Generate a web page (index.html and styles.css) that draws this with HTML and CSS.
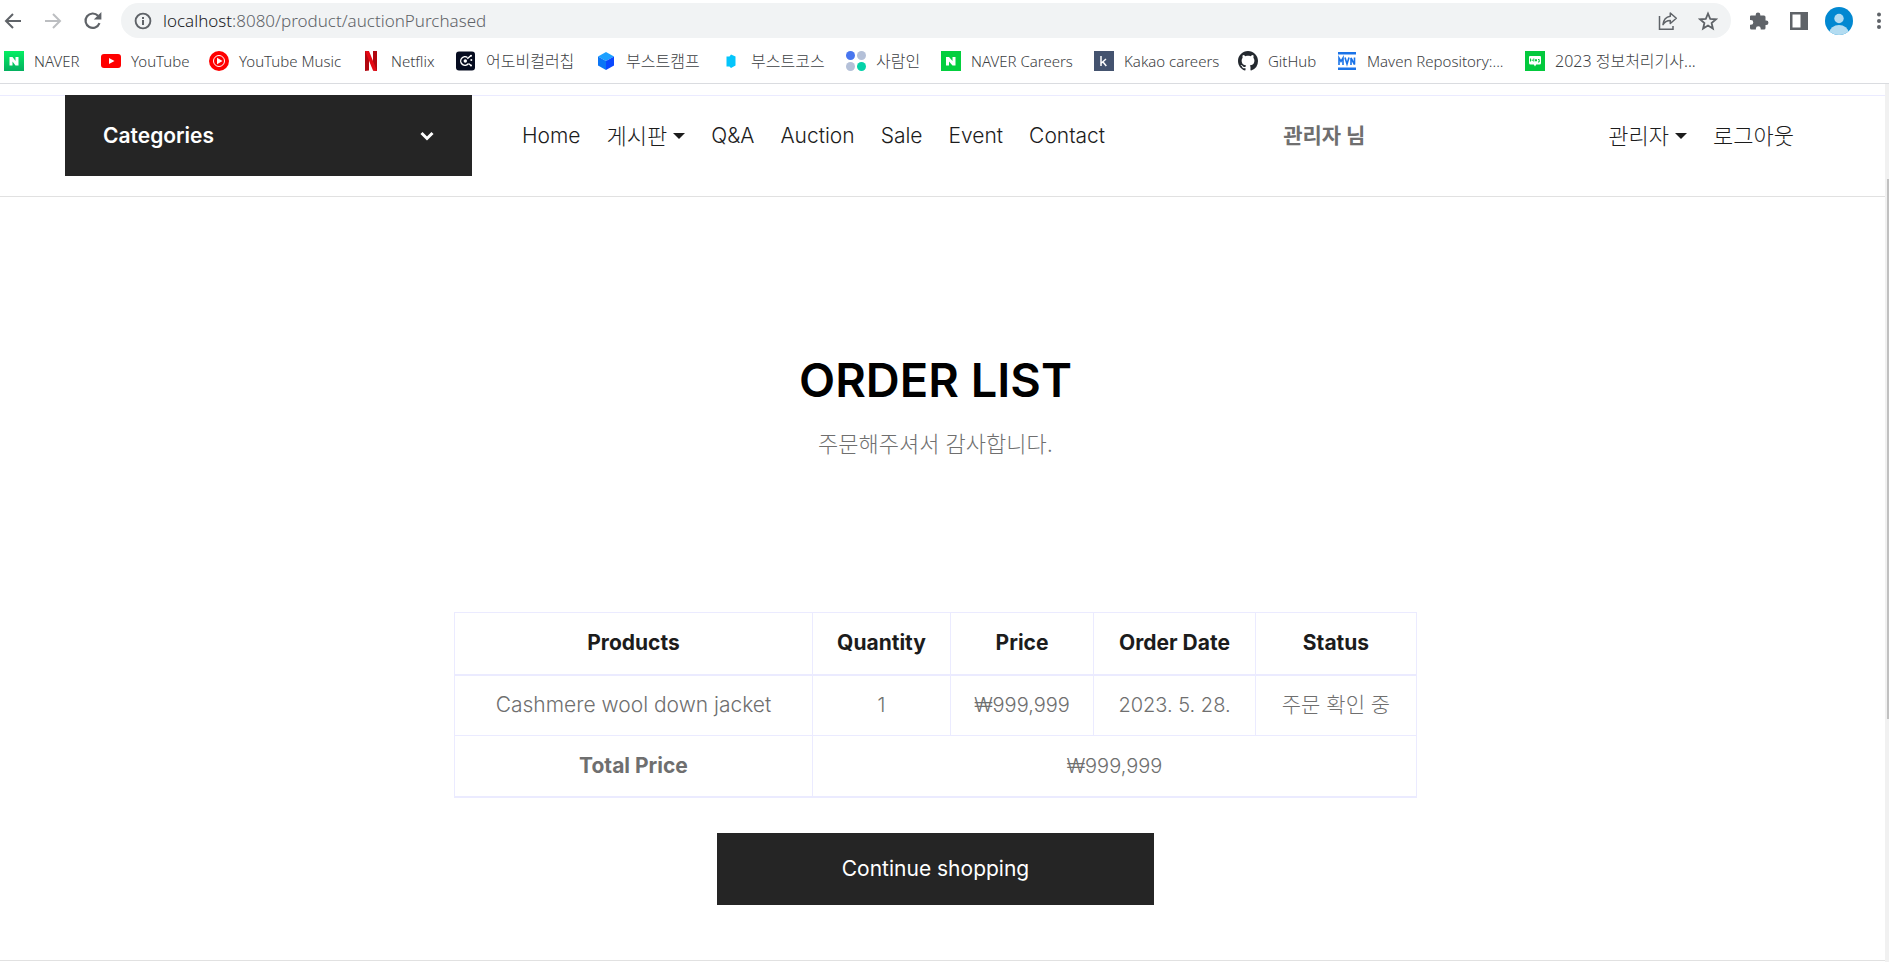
FILE: index.html
```html
<!DOCTYPE html>
<html lang="ko">
<head>
<meta charset="utf-8">
<title>Order List</title>
<link rel="stylesheet" href="styles.css">
</head>
<body>
<header class="browser">
  <div class="toolbar">
    <button class="tool" aria-label="Back"><svg width="20" height="20" viewBox="0 0 20 20" fill="none" stroke="#5f6368" stroke-width="2"><path d="M18 10H3M10 3l-7 7 7 7"/></svg></button>
    <button class="tool" aria-label="Forward"><svg width="20" height="20" viewBox="0 0 20 20" fill="none" stroke="#bcbec1" stroke-width="2"><path d="M2 10h15M10 3l7 7-7 7"/></svg></button>
    <button class="tool" aria-label="Reload"><svg width="20" height="20" viewBox="0 0 20 20"><path d="M16.5 12.2A7.2 7.2 0 1 1 15 4.8" fill="none" stroke="#5f6368" stroke-width="2.2"/><path d="M18.4 1v7.6h-7.6z" fill="#5f6368"/></svg></button>
    <div class="address">
      <svg width="18" height="18" viewBox="0 0 18 18"><circle cx="9" cy="9" r="7.4" fill="none" stroke="#5f6368" stroke-width="1.9"/><path d="M8 8h2v5H8zM8 5h2v2H8z" fill="#5f6368"/></svg>
      <div class="url"><span class="host">localhost</span>:8080/product/auctionPurchased</div>
      <button class="tool" aria-label="Share"><svg width="20" height="20" viewBox="0 0 20 20" fill="none" stroke="#5f6368" stroke-width="1.5"><path d="M1.5 5v13.2H15V15"/><path d="M12.3 2l6 5.3-6 5.200V9.400C8.500 9.400 6.500 10.800 5 13.600 5.500 9 8 5.800 12.300 5.200z" stroke-linejoin="round"/></svg></button>
      <button class="tool" aria-label="Bookmark"><svg width="20" height="20" viewBox="0 0 20 20"><path d="M10 2.500l2.200 5.300 5.700.5-4.300 3.700 1.300 5.600L10 14.600l-4.900 3 1.300-5.600-4.300-3.700 5.700-.5z" fill="none" stroke="#5f6368" stroke-width="1.8"/></svg></button>
    </div>
    <button class="tool" aria-label="Extensions"><svg width="20" height="20" viewBox="0 0 20 20" fill="#5f6368"><path d="M2 4.500h4.700v-.8a2.300 2.300 0 0 1 4.600 0v.8H15q1.500 0 1.500 1.500v3.400h.7a2.200 2.200 0 0 1 0 4.500h-.7V17q0 1.500-1.500 1.500h-3.300v-.9a2.400 2.400 0 0 0-4.800 0v.9H2.500Q1 18.500 1 17v-3.200h.9a2.400 2.400 0 0 0 0-4.800H1V5.500q0-1 1-1z"/></svg></button>
    <button class="tool" aria-label="Side panel"><svg width="20" height="20" viewBox="0 0 20 20"><path d="M1 1h18v18H1zM3.500 3.500v13h8v-13z" fill="#5f6368" fill-rule="evenodd"/></svg></button>
    <button class="tool avatar" aria-label="Profile"><svg width="28" height="28" viewBox="0 0 28 28"><defs><clipPath id="face"><circle cx="14" cy="14" r="14"/></clipPath></defs><g clip-path="url(#face)"><path d="M0 0h28v28H0z" fill="#0288d1"/><circle cx="14" cy="11.500" r="4.700" fill="#b3dcf1"/><ellipse cx="14" cy="25.500" rx="9.500" ry="7.500" fill="#b3dcf1"/></g></svg></button>
    <button class="tool" aria-label="Menu"><svg width="20" height="20" viewBox="0 0 20 20" fill="#5f6368"><circle cx="10" cy="3.500" r="2"/><circle cx="10" cy="10" r="2"/><circle cx="10" cy="16" r="2"/></svg></button>
  </div>
  <nav class="bookmarks" aria-label="Bookmarks">
    <a href="#"><svg width="20" height="20" viewBox="0 0 20 20"><defs><linearGradient id="nv" x1="0" y1="0" x2="0" y2="1"><stop stop-color="#03ef62"/><stop offset="1" stop-color="#04b060"/></linearGradient></defs><path d="M0 0h20v20H0z" fill="url(#nv)"/><path d="M5.500 6h3l3 4V6h3v8.500h-3l-3-4v4h-3z" fill="#fff"/></svg>NAVER</a>
    <a href="#"><svg width="20" height="20" viewBox="0 0 20 20"><rect y="3" width="20" height="14" rx="3" fill="#f00"/><path d="M8 7l5.500 3L8 13z" fill="#fff"/></svg>YouTube</a>
    <a href="#"><svg width="20" height="20" viewBox="0 0 20 20"><circle cx="10" cy="10" r="10" fill="#f00"/><circle cx="10" cy="10" r="5.500" fill="none" stroke="#fff"/><path d="M8 6.800l5.500 3.200L8 13.200z" fill="#fff"/></svg>YouTube Music</a>
    <a href="#"><svg width="20" height="20" viewBox="0 0 20 20"><path d="M4 0h4v19.500L4 20zM12 0h4v20l-4-.5z" fill="#b1060f"/><path d="M4 0h4l8 20-4-.5z" fill="#e50914"/></svg>Netflix</a>
    <a href="#" class="hangul"><svg width="20" height="20" viewBox="0 0 20 20"><rect width="19" height="19" y=".5" rx="3" fill="#060c20"/><g fill="none" stroke="#fff" stroke-width="1.400"><path d="M12.300 12.800A4.300 4.300 0 1 1 11.500 6.500"/><path d="M11.300 7.700l3.700-3.200M12.500 12.500l2.500 2"/></g><g fill="#fff"><circle cx="9.300" cy="10" r="1.700"/><circle cx="15" cy="4.700" r="1"/><circle cx="15.300" cy="9" r="1"/><circle cx="15" cy="14.500" r="1"/></g></svg>어도비컬러칩</a>
    <a href="#" class="hangul"><svg width="20" height="20" viewBox="0 0 20 20"><path d="M10 1l8 4.500L10 10 2 5.500z" fill="#1da0ff"/><path d="M2 5.500l8 4.500v9l-8-4.500z" fill="#0b75f5"/><path d="M18 5.500L10 10v9l8-4.500z" fill="#0b48ff"/></svg>부스트캠프</a>
    <a href="#" class="hangul"><svg width="20" height="20" viewBox="0 0 20 20"><path d="M5.500 5.500h3L10 3.500l4.500 2v9L10 17l-1.500-1.500h-3z" fill="#04c5fb"/></svg>부스트코스</a>
    <a href="#" class="hangul"><svg width="20" height="20" viewBox="0 0 20 20"><circle cx="4.500" cy="4.500" r="4.500" fill="#4876ef"/><circle cx="15.500" cy="4.500" r="4.500" fill="#b4c0d8"/><circle cx="4.500" cy="15.500" r="4.500" fill="#b4c0d8"/><circle cx="15.500" cy="15.500" r="4.500" fill="#04d2a9"/></svg>사람인</a>
    <a href="#"><svg width="20" height="20" viewBox="0 0 20 20"><path d="M0 0h20v20H0z" fill="#03cf3e"/><path d="M5 6h3l3.500 4V6h3v8.500h-3L8 10.500v4H5z" fill="#fff"/></svg>NAVER Careers</a>
    <a href="#"><svg width="20" height="20" viewBox="0 0 20 20"><path d="M0 0h20v20H0z" fill="#44536f"/><path d="M7 5v10M12 8l-4.500 4M8.800 10.800L12.300 15" fill="none" stroke="#fff" stroke-width="1.500"/></svg>Kakao careers</a>
    <a href="#"><svg width="20" height="20" viewBox="0 0 16 16"><path fill="#24292f" d="M8 0C3.580 0 0 3.580 0 8c0 3.540 2.290 6.530 5.470 7.590.4.070.55-.17.55-.38 0-.19-.01-.82-.01-1.490-2.010.37-2.530-.49-2.690-.94-.09-.23-.48-.94-.82-1.130-.28-.15-.68-.52-.01-.53.63-.01 1.080.58 1.230.82.72 1.210 1.870.87 2.330.66.070-.52.28-.87.51-1.070-1.780-.2-3.640-.89-3.640-3.950 0-.87.31-1.590.82-2.150-.08-.2-.36-1.020.08-2.120 0 0 .67-.21 2.200.82.64-.18 1.320-.27 2-.27s1.360.09 2 .27c1.530-1.040 2.200-.82 2.200-.82.44 1.100.16 1.920.08 2.120.51.56.82 1.270.82 2.150 0 3.070-1.870 3.750-3.650 3.950.29.25.54.73.54 1.480 0 1.070-.01 1.930-.01 2.200 0 .21.15.46.55.38A8.010 8.010 0 0 0 16 8c0-4.420-3.580-8-8-8z"/></svg>GitHub</a>
    <a href="#"><svg width="20" height="20" viewBox="0 0 20 20"><path d="M1 1h18v2.500H1zM1 16.500h18V19H1z" fill="#1a73e8"/><path d="M2 14V7l2 3.500L6 7v7M8 6.500l2 6.500 2-6.500M14 14V7l3.500 6.500V6.500" fill="none" stroke="#1a73e8" stroke-width="1.600"/></svg>Maven Repository:...</a>
    <a href="#" class="hangul"><svg width="20" height="20" viewBox="0 0 20 20"><path d="M0 0h20v20H0z" fill="#03c93d"/><path d="M5 5h10q1 0 1 1v6q0 1.500-1.500 1.500h-3.300L10 15.500l-1.200-2H5.500Q4 13.500 4 12V6q0-1 1-1z" fill="#fff"/><path d="M5.500 7.500v3M7.200 10V8.500M8.800 7.500v3M10.500 8.500h1v1.500h-1zM13 8.500h1.200v2.500H13" fill="none" stroke="#03c93d"/></svg>2023 정보처리기사...</a>
  </nav>
</header>
<div class="viewport">
  <div class="page">
    <div class="sitebar">
      <button class="categories">Categories<svg width="14" height="10" viewBox="0 0 14 10"><path d="M1.500 2L7 7.500 12.500 2" fill="none" stroke="#fff" stroke-width="3"/></svg></button>
      <nav class="menu" aria-label="Main">
        <a href="#">Home</a>
        <a href="#" class="drop">게시판</a>
        <a href="#">Q&amp;A</a>
        <a href="#">Auction</a>
        <a href="#">Sale</a>
        <a href="#">Event</a>
        <a href="#">Contact</a>
      </nav>
      <strong class="user">관리자 님</strong>
      <nav class="menu account" aria-label="Account">
        <a href="#" class="drop">관리자</a>
        <a href="#">로그아웃</a>
      </nav>
    </div>
    <main class="order">
      <h1>ORDER LIST</h1>
      <p class="thanks">주문해주셔서 감사합니다.</p>
      <table>
        <colgroup><col class="product"><col class="quantity"><col class="price"><col class="date"><col class="status"></colgroup>
        <thead><tr><th>Products</th><th>Quantity</th><th>Price</th><th>Order Date</th><th>Status</th></tr></thead>
        <tbody>
          <tr><td class="name">Cashmere wool down jacket</td><td>1</td><td>₩999,999</td><td>2023. 5. 28.</td><td class="state">주문 확인 중</td></tr>
          <tr><th scope="row">Total Price</th><td colspan="4">₩999,999</td></tr>
        </tbody>
      </table>
      <button class="continue">Continue shopping</button>
    </main>
  </div>
  <div class="scroll" aria-hidden="true"><div class="thumb"></div></div>
</div>
</body>
</html>
```
FILE: styles.css
```css
* { box-sizing: border-box; }
body {
  margin: 0;
  min-height: 100vh;
  display: flex;
  flex-direction: column;
  background: #fff;
  font-family: Inter, "Noto Sans CJK KR", sans-serif;
  font-size: 20px;
  color: #6f6f6f;
}
button { border: 0; padding: 0; background: none; font: inherit; color: inherit; }
a { color: inherit; text-decoration: none; }
svg { display: block; flex: none; }

/* Browser chrome */
.browser {
  font-family: "Noto Sans", "Noto Sans CJK KR", sans-serif;
  border-bottom: 1px solid #dadce0;
  color: #3c4043;
}
.toolbar { display: flex; align-items: center; gap: 20px; padding: 3px 0 0 3px; }
.address {
  flex: 1;
  display: flex;
  align-items: center;
  gap: 20px;
  height: 35px;
  margin: 0 -2px;
  padding: 0 13px;
  border-radius: 18px;
  background: #f1f3f4;
}
.avatar { margin: 0 -4px; }
.url { flex: 1; margin-left: -9px; font-size: 17px; font-weight: 300; color: #5f6368; }
.host { color: #202124; }
.bookmarks {
  display: grid;
  grid-template-columns: 97px 108px 152px 95px 140px 125px 125px 95px 153px 144px 99px 188px auto;
  align-items: center;
  height: 45px;
  padding-left: 4px;
  font-size: 15px;
  font-weight: 300;
  line-height: 20px;
  white-space: nowrap;
}
.bookmarks a { display: flex; align-items: center; gap: 10px; }
.bookmarks .hangul { font-size: 16px; }

/* Page */
.viewport { flex: 1; display: grid; grid-template-columns: 1fr 4px; }
.scroll { padding: 95px 0 0 2px; background: #f1f1f1; }
.thumb { height: 540px; background: #c1c1c1; }
.page { padding-top: 11px; }
.sitebar {
  display: flex;
  align-items: center;
  height: 102px;
  padding: 0 91px 20px 65px;
  border-top: 1px solid #ebebff;
  border-bottom: 1px solid #e1e1e1;
  color: #1c1c1c;
  font-size: 21px;
  line-height: 30px;
}
.categories {
  display: flex;
  align-items: center;
  justify-content: space-between;
  width: 407px;
  height: 81px;
  margin-top: -1px;
  padding: 0 38px;
  background: #252525;
  color: #fff;
  font-weight: 600;
}
.menu { display: flex; align-items: center; gap: 26px; margin-left: 50px; font-weight: 300; white-space: nowrap; }
.drop { display: flex; align-items: center; gap: 6px; }
.drop, .account { font-size: 22px; }
.drop::after { content: ""; border: 6px solid transparent; border-top-color: currentColor; border-bottom: 0; }
.user { margin-left: 178px; color: #6f6f6f; font-weight: 700; }
.account { margin-left: auto; }

.order {
  display: flex;
  flex-direction: column;
  align-items: center;
  padding: 144px 14px 55px 0;
  border-bottom: 1px solid #e1e1e1;
}
h1 { margin: 0; font-size: 47px; line-height: 78px; font-weight: 600; color: #000; }
.thanks { margin: 10px 0 153px; font-size: 22px; line-height: 30px; font-weight: 300; }
table {
  width: 962px;
  border-collapse: collapse;
  border-bottom: 2px solid #ebebff;
  table-layout: fixed;
  text-align: center;
  font-weight: 300;
}
.product { width: 358px; }
.quantity { width: 138px; }
.price { width: 143px; }
.date { width: 162px; }
.status { width: 161px; }
th, td { height: 61px; padding: 0; border: 1px solid #ebebff; line-height: 30px; }
th { font-size: 21px; font-weight: 700; }
thead th { height: 62px; border-bottom-width: 2px; color: #1c1c1c; }
.name, .state { font-size: 21px; }
.continue { width: 437px; height: 72px; margin-top: 35px; background: #252525; color: #fff; font-size: 21px; }
```
